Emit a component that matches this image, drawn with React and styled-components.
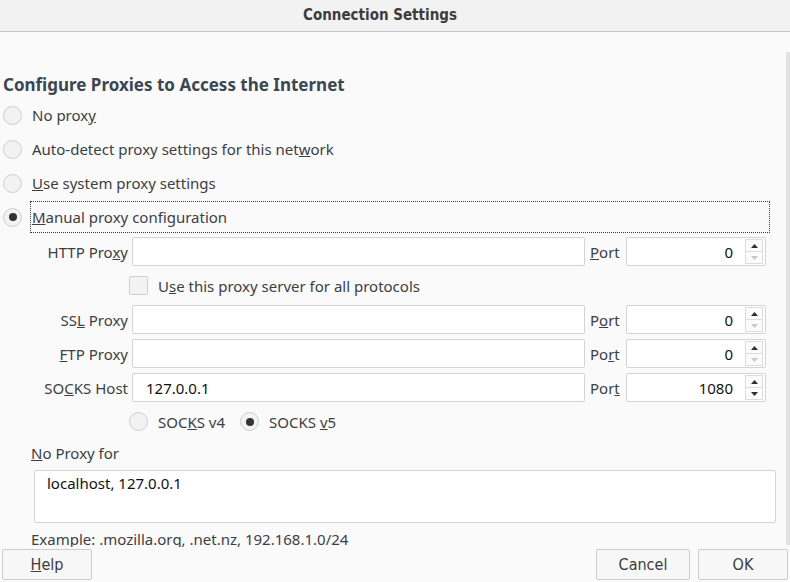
import React from 'react';
import styled, { createGlobalStyle } from 'styled-components';

const GlobalStyle = createGlobalStyle`
  html, body {
    margin: 0;
    padding: 0;
    background: #fafafa;
  }
  body {
    font-family: 'Noto Sans', 'Open Sans', sans-serif;
    font-size: 15px;
    color: #3c4043;
  }
`;

export default function App() {
  return (
    <Dialog>
      <GlobalStyle />
      <TitleBar>Connection Settings</TitleBar>
      <Body>
        <Content>
          <Heading>Configure Proxies to Access the Internet</Heading>

          <RadioRow>
            <Radio />
            <span>No prox<u>y</u></span>
          </RadioRow>
          <RadioRow>
            <Radio />
            <span>Auto-detect proxy settings for this net<u>w</u>ork</span>
          </RadioRow>
          <RadioRow>
            <Radio />
            <span><u>U</u>se system proxy settings</span>
          </RadioRow>
          <RadioRow>
            <Radio checked />
            <FocusLabel><u>M</u>anual proxy configuration</FocusLabel>
          </RadioRow>

          <ProxyGrid>
            <FieldLabel><span>HTTP Pro<u>x</u>y</span></FieldLabel>
            <TextInput />
            <PortLabel><span><u>P</u>ort</span></PortLabel>
            <SpinBox value="0" />

            <WideCell>
              <Check />
              <span>U<u>s</u>e this proxy server for all protocols</span>
            </WideCell>

            <FieldLabel><span>SS<u>L</u> Proxy</span></FieldLabel>
            <TextInput />
            <PortLabel><span>P<u>o</u>rt</span></PortLabel>
            <SpinBox value="0" />

            <FieldLabel><span><u>F</u>TP Proxy</span></FieldLabel>
            <TextInput />
            <PortLabel><span>Po<u>r</u>t</span></PortLabel>
            <SpinBox value="0" />

            <FieldLabel><span>SO<u>C</u>KS Host</span></FieldLabel>
            <TextInput>127.0.0.1</TextInput>
            <PortLabel><span>Por<u>t</u></span></PortLabel>
            <SpinBox value="1080" canDown />

            <WideCell>
              <Radio />
              <VersionText>SOC<u>K</u>S v4</VersionText>
              <Radio checked />
              <span>SOCKS <u>v</u>5</span>
            </WideCell>
          </ProxyGrid>

          <NoProxyLabel><u>N</u>o Proxy for</NoProxyLabel>
          <TextArea>localhost, 127.0.0.1</TextArea>
          <Example>Example: .mozilla.org, .net.nz, 192.168.1.0/24</Example>
        </Content>
        <ScrollTrack />
      </Body>
      <ButtonBar>
        <Button><u>H</u>elp</Button>
        <Spacer />
        <Button wide>Cancel</Button>
        <Button>OK</Button>
      </ButtonBar>
    </Dialog>
  );
}

function SpinBox({ value, canDown }) {
  return (
    <Spin>
      <SpinValue>{value}</SpinValue>
      <SpinButtons>
        <SpinBtn>
          <svg width="7" height="4" viewBox="0 0 7 4"><path d="M0 4 L3.5 0 L7 4 Z" fill="#2e2e2e" /></svg>
        </SpinBtn>
        <SpinBtn>
          <svg width="7" height="4" viewBox="0 0 7 4"><path d="M0 0 L3.5 4 L7 0 Z" fill={canDown ? '#2e2e2e' : '#c8c8c8'} /></svg>
        </SpinBtn>
      </SpinButtons>
    </Spin>
  );
}

const Dialog = styled.div`
  display: flex;
  flex-direction: column;
  height: 582px;
  width: 790px;
  overflow: hidden;
  background: #fafafa;
`;

const TitleBar = styled.div`
  height: 32px;
  flex: none;
  display: flex;
  align-items: center;
  justify-content: center;
  background: #f2f2f2;
  border-bottom: 1px solid #c8c8c8;
  box-sizing: border-box;
  font-family: 'Liberation Sans Narrow', 'DejaVu Sans Condensed', 'Noto Sans', sans-serif;
  font-weight: bold;
  font-size: 15px;
  color: #3c3c3c;
  padding: 0 30px 2px 0;
`;

const Body = styled.div`
  flex: 1;
  display: flex;
  overflow: hidden;
  min-height: 0;
`;

const Content = styled.div`
  flex: 1;
  padding: 40px 0 0 3px;
  overflow: hidden;
`;

const ScrollTrack = styled.div`
  width: 4px;
  margin: 20px 0 2px;
  background: #e3e3e3;
`;

const Heading = styled.h1`
  margin: 0 0 1px;
  height: 25px;
  line-height: 25px;
  font-size: 17px;
  font-weight: bold;
  color: #3c4650;
`;

const RadioRow = styled.div`
  display: flex;
  align-items: center;
  height: 34px;
  gap: 10px;
`;

const Radio = styled.span`
  width: 17px;
  height: 17px;
  flex: none;
  border-radius: 50%;
  border: 1px solid #cfcfcf;
  background: #f2f2f2;
  display: inline-flex;
  align-items: center;
  justify-content: center;
  &::after {
    content: '';
    width: 8px;
    height: 8px;
    border-radius: 50%;
    background: ${(p) => (p.checked ? '#333' : 'transparent')};
  }
`;

const FocusLabel = styled.span`
  flex: 1;
  margin-left: -2px;
  margin-right: 16px;
  padding: 5px 1px;
  border: 1px dotted #3c3c3c;
`;

const ProxyGrid = styled.div`
  display: grid;
  grid-template-columns: 129px 453px 41px 140px;
  grid-auto-rows: 29px;
  row-gap: 5px;
  margin-top: 3px;
`;

const FieldLabel = styled.label`
  display: flex;
  align-items: center;
  justify-content: flex-end;
  padding-right: 4px;
`;

const TextInput = styled.div`
  border: 1px solid #d4d4d4;
  border-radius: 2px;
  background: #fff;
  display: flex;
  align-items: center;
  padding-left: 13px;
  color: #111;
`;

const PortLabel = styled.label`
  display: flex;
  align-items: center;
  padding-left: 5px;
`;

const Spin = styled.div`
  border: 1px solid #d4d4d4;
  border-radius: 2px;
  background: #fff;
  display: flex;
  align-items: center;
  color: #111;
`;

const SpinValue = styled.span`
  flex: 1;
  text-align: right;
  padding-right: 12px;
`;

const SpinButtons = styled.div`
  display: flex;
  flex-direction: column;
  margin-right: 2px;
`;

const SpinBtn = styled.span`
  width: 16px;
  height: 11px;
  border: 1px solid #dcdcdc;
  display: flex;
  align-items: center;
  justify-content: center;
  background: #fbfbfb;
  & + & {
    margin-top: -1px;
  }
`;

const WideCell = styled.div`
  grid-column: 2 / 5;
  display: flex;
  align-items: center;
  gap: 10px;
  margin-left: -3px;
`;

const Check = styled.span`
  width: 17px;
  height: 17px;
  border: 1px solid #cfcfcf;
  border-radius: 2px;
  background: #f2f2f2;
`;

const VersionText = styled.span`
  margin-right: 5px;
`;

const NoProxyLabel = styled.div`
  margin: 4px 0 0 28px;
  height: 26px;
  line-height: 26px;
`;

const TextArea = styled.div`
  margin: 4px 10px 0 31px;
  height: 53px;
  box-sizing: border-box;
  border: 1px solid #d4d4d4;
  border-radius: 2px;
  background: #fff;
  padding: 2px 12px;
  color: #111;
`;

const Example = styled.div`
  margin: 4px 0 0 28px;
  line-height: 24px;
`;

const ButtonBar = styled.div`
  flex: none;
  height: 35px;
  display: flex;
  align-items: flex-start;
  gap: 8px;
  padding: 2px 2px 0;
  box-sizing: border-box;
`;

const Spacer = styled.div`
  flex: 1;
`;

const Button = styled.button`
  height: 31px;
  width: ${(p) => (p.wide ? '94px' : '90px')};
  border: 1px solid #cdcdcd;
  border-radius: 2px;
  background: #f7f7f7;
  font-family: 'Liberation Sans Narrow', 'DejaVu Sans Condensed', 'Noto Sans', sans-serif;
  font-size: 16px;
  color: #3c3c3c;
  padding: 0;
`;
